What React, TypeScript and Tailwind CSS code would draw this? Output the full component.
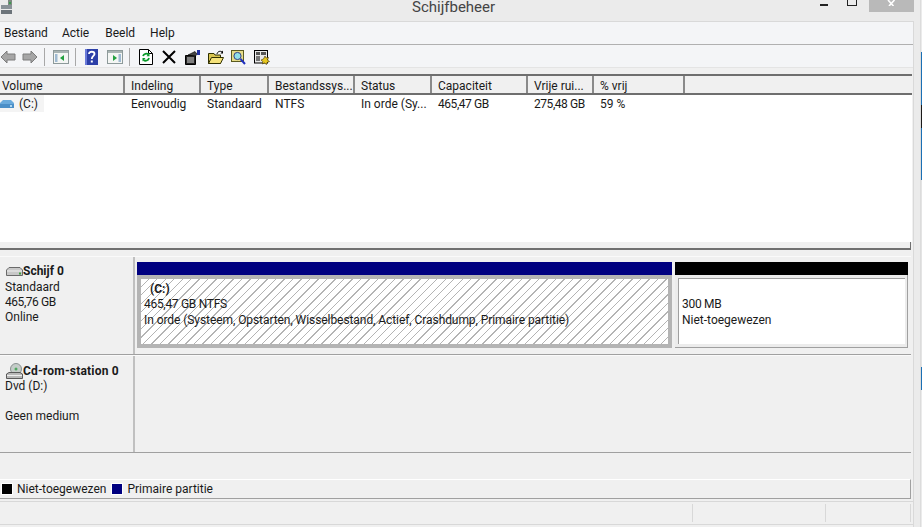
import React from "react";

const columns = [
  { label: "Volume", w: "w-[125px]" },
  { label: "Indeling", w: "w-[76px]" },
  { label: "Type", w: "w-[68px]" },
  { label: "Bestandssys...", w: "w-[86px]" },
  { label: "Status", w: "w-[77px]" },
  { label: "Capaciteit", w: "w-[96px]" },
  { label: "Vrije rui...", w: "w-[66px]" },
  { label: "% vrij", w: "w-[91px]" },
  { label: "", w: "flex-1" },
];

const cells = [
  { text: "Eenvoudig", w: "w-[76px]", track: "" },
  { text: "Standaard", w: "w-[68px]", track: "" },
  { text: "NTFS", w: "w-[86px]", track: "" },
  { text: "In orde (Sy...", w: "w-[77px]", track: "" },
  { text: "465,47 GB", w: "w-[96px]", track: "tracking-[-0.45px]" },
  { text: "275,48 GB", w: "w-[66px]", track: "tracking-[-0.45px]" },
  { text: "59 %", w: "w-[91px]", track: "" },
];

function AppIcon() {
  return (
    <svg width="12" height="14" viewBox="0 0 12 14" className="block">
      <rect x="0" y="5" width="11" height="4" fill="#8a9298" />
      <rect x="0" y="10" width="11" height="4" fill="#6c747a" />
      <rect x="7" y="0" width="4" height="5" fill="#7d8a80" />
      <rect x="8" y="2" width="2" height="2" fill="#3c9a50" />
    </svg>
  );
}

function ArrowLeft() {
  return (
    <svg width="16" height="14" viewBox="0 0 16 14" className="block">
      <path d="M7 1 L1 7 L7 13 V10 H15 V4 H7 Z" fill="#a6a6a6" stroke="#7c7c7c" />
    </svg>
  );
}

function ArrowRight() {
  return (
    <svg width="16" height="14" viewBox="0 0 16 14" className="block">
      <path d="M9 1 L15 7 L9 13 V10 H1 V4 H9 Z" fill="#a6a6a6" stroke="#7c7c7c" />
    </svg>
  );
}

function PaneIcon({ flip }: { flip?: boolean }) {
  return (
    <svg width="16" height="14" viewBox="0 0 16 14" className="block">
      <rect x="0.5" y="0.5" width="15" height="13" fill="#f4f6f4" stroke="#8d9a9a" />
      <rect x="1" y="1" width="14" height="2" fill="#a9b4b4" />
      {flip ? (
        <>
          <path d="M6 5 L10 8 L6 11 Z" fill="#22a040" />
          <path d="M11.5 5 H14 M11.5 7 H14 M11.5 9 H14 M11.5 11 H14" stroke="#4a7fb0" />
        </>
      ) : (
        <>
          <path d="M2 5 H4.5 M2 7 H4.5 M2 9 H4.5 M2 11 H4.5" stroke="#4a7fb0" />
          <path d="M11 5 L7 8 L11 11 Z" fill="#22a040" />
        </>
      )}
    </svg>
  );
}

function HelpIcon() {
  return (
    <svg width="13" height="16" viewBox="0 0 13 16" className="block">
      <rect width="13" height="16" fill="#2c3fa8" />
      <rect x="0" y="0" width="2" height="16" fill="#6a7ad8" />
      <path d="M4 5 C4 2 9.5 2 9.5 5 C9.5 7 6.8 7 6.8 10" fill="none" stroke="#fff" strokeWidth="1.8" />
      <rect x="5.8" y="11.5" width="2" height="2" fill="#fff" />
    </svg>
  );
}

function RefreshIcon() {
  return (
    <svg width="14" height="16" viewBox="0 0 14 16" className="block">
      <path d="M0.5 0.5 H9.5 L13.5 4.5 V15.5 H0.5 Z" fill="#fff" stroke="#000" />
      <path d="M9.5 0.5 V4.5 H13.5" fill="none" stroke="#000" />
      <path d="M4 7 A3.5 3.5 0 0 1 9.5 5.5 M10 9 A3.5 3.5 0 0 1 4.5 11" fill="none" stroke="#0a9a2a" strokeWidth="1.8" />
      <path d="M10.5 3.8 V7.2 H7.5 Z M3.5 12.5 V9 H6.5 Z" fill="#0a9a2a" />
    </svg>
  );
}

function DeleteIcon() {
  return (
    <svg width="14" height="14" viewBox="0 0 14 14" className="block">
      <path d="M1 1 L13 13 M13 1 L1 13" stroke="#000" strokeWidth="2" />
    </svg>
  );
}

function PropsIcon() {
  return (
    <svg width="16" height="15" viewBox="0 0 16 15" className="block">
      <path d="M0.5 5.5 H10.5 V14.5 H0.5 Z" fill="#222" stroke="#000" />
      <path d="M2 8 H9 M2 10 H9 M2 12 H9" stroke="#ddd" />
      <path d="M3 5 L10 1.5 L12 4 L10.5 6 Z" fill="#444" stroke="#000" strokeWidth="0.6" />
      <rect x="12" y="0" width="3" height="5" fill="#2030a0" />
    </svg>
  );
}

function FolderIcon() {
  return (
    <svg width="16" height="14" viewBox="0 0 16 14" className="block">
      <path d="M0.5 3.5 H6 L7 5 H12.5 V13.5 H0.5 Z" fill="#d8c450" stroke="#303000" />
      <path d="M0.5 13.5 L3.5 7.5 H15.5 L12.5 13.5 Z" fill="#f5e27a" stroke="#303000" />
      <path d="M9 4 C9.5 1.5 12 0.5 14.5 2" fill="none" stroke="#000" />
      <path d="M15 0.5 V3.5 H12.5 Z" fill="#000" />
    </svg>
  );
}

function SearchIcon() {
  return (
    <svg width="15" height="15" viewBox="0 0 15 15" className="block">
      <rect x="0.5" y="0.5" width="12" height="11" fill="#e6dc88" stroke="#5a5a20" />
      <circle cx="6.5" cy="6" r="3.6" fill="#8fe0e8" stroke="#30408a" />
      <path d="M9.5 9 L14 14" stroke="#2030c0" strokeWidth="2" />
    </svg>
  );
}

function SettingsIcon() {
  return (
    <svg width="16" height="15" viewBox="0 0 16 15" className="block">
      <rect x="0.5" y="0.5" width="13" height="12.5" fill="#e8e8e8" stroke="#000" />
      <rect x="2" y="2" width="4" height="3" fill="#555" />
      <rect x="7" y="2" width="5" height="3" fill="#555" />
      <rect x="2" y="6" width="4" height="5" fill="#777" />
      <path d="M11 6 L12 8 L14.5 7.5 L13.5 10 L15.5 11.5 L13 12.5 L12.5 14.5 L10.5 13 L8.5 14 L8.8 11.5 L7 10 L9.5 9 Z" fill="#e8c820" stroke="#403000" strokeWidth="0.6" />
    </svg>
  );
}

function VolumeIcon() {
  return (
    <svg width="14" height="8" viewBox="0 0 14 8" className="block">
      <path d="M3 0 H11 L14 3 V8 H0 V3 Z" fill="#6aaadc" />
      <rect x="0" y="4" width="14" height="4" fill="#4b8fc8" />
      <rect x="10" y="5" width="2" height="2" fill="#b0d8f0" />
    </svg>
  );
}

function DiskIcon() {
  return (
    <svg width="17" height="9" viewBox="0 0 17 9" className="block">
      <path d="M3 0.5 H14 L16.5 3 V8.5 H0.5 V3 Z" fill="#c8c8c8" stroke="#6a6a6a" />
      <rect x="1" y="3.5" width="15" height="1" fill="#f0f0f0" />
      <rect x="13" y="5.5" width="2" height="2" fill="#40a040" />
    </svg>
  );
}

function CdIcon() {
  return (
    <svg width="17" height="16" viewBox="0 0 17 16" className="block">
      <circle cx="10" cy="6" r="5.5" fill="#c4ccc8" stroke="#8a9090" />
      <circle cx="10" cy="6" r="1.5" fill="#50a860" />
      <path d="M3 9.5 H14 L16.5 11 V15.5 H0.5 V11 Z" fill="#b8b8b8" stroke="#5a5a5a" />
      <rect x="1" y="12" width="15" height="1" fill="#eeeeee" />
    </svg>
  );
}

function Sep() {
  return <div className="h-[18px] w-px bg-[#a8a8a8]" />;
}

function WindowButtons() {
  return (
    <div className="flex items-start">
      <div className="mt-[4px] h-[2px] w-[8px] bg-[#222]" />
      <div className="ml-[19px] h-[6px] w-[10px] border-x border-b border-[#222]" />
      <div className="ml-[12px] flex h-[12px] w-[45px] items-start justify-center bg-[#b9b9b9]">
        <svg width="9" height="6" viewBox="0 0 9 6" className="block">
          <path d="M1 0 L6.5 6 M7.5 0 L2 6" stroke="#fff" strokeWidth="1.6" />
        </svg>
      </div>
    </div>
  );
}

export default function App() {
  return (
    <div className="flex h-[527px] w-[922px] overflow-hidden bg-[#ebebeb] font-['Roboto',sans-serif] text-[12px] leading-[16px] text-[#1a1a1a]">
      <div className="flex w-[914px] flex-col">
        {/* title bar */}
        <div className="relative flex h-[21px] items-start justify-between">
          <div className="pl-[1px]">
            <AppIcon />
          </div>
          <div className="absolute left-[412px] top-0 text-[15px] leading-[15px] text-[#444]">Schijfbeheer</div>
          <div className="ml-auto">
            <WindowButtons />
          </div>
        </div>

        <div className="flex flex-1 flex-col border-r border-t border-[#d9d9d9] bg-[#f0f0f0] pb-[2px]">
          {/* menu */}
          <div className="flex h-[23px] items-center border-b border-[#b0b0b0] bg-[#f4f5f7] pl-[4px]">
            <span>Bestand</span>
            <span className="ml-[14px]">Actie</span>
            <span className="ml-[16px]">Beeld</span>
            <span className="ml-[15px]">Help</span>
          </div>

          {/* toolbar */}
          <div className="flex h-[23px] items-center border-b border-[#e4e4e4] bg-[#f4f5f7] pt-[2px]">
            <ArrowLeft />
            <div className="ml-[6px]"><ArrowRight /></div>
            <div className="ml-[6px]"><Sep /></div>
            <div className="ml-[8px]"><PaneIcon /></div>
            <div className="ml-[6px]"><Sep /></div>
            <div className="ml-[9px]"><HelpIcon /></div>
            <div className="ml-[9px]"><PaneIcon flip /></div>
            <div className="ml-[6px]"><Sep /></div>
            <div className="ml-[9px]"><RefreshIcon /></div>
            <div className="ml-[9px]"><DeleteIcon /></div>
            <div className="ml-[9px]"><PropsIcon /></div>
            <div className="ml-[7px]"><FolderIcon /></div>
            <div className="ml-[7px]"><SearchIcon /></div>
            <div className="ml-[8px]"><SettingsIcon /></div>
          </div>

          <div className="h-[6px] bg-[#f0f0f0]" />

          {/* volume table */}
          <div className="flex h-[168px] flex-col pr-[1px]">
            <div className="flex h-[21px] border-y-2 border-[#6e6e6e] bg-[#f0f0f0]">
              {columns.map((c) => (
                <div key={c.label} className={`${c.w} border-r-2 border-[#8a8a8a] pl-[6px] leading-[20px] first:pl-[2px] last:border-r-0`}>
                  {c.label}
                </div>
              ))}
            </div>
            <div className="flex-1 bg-white">
              <div className="flex h-[17px] items-center">
                <div className="flex w-[125px] items-center">
                  <div className="flex h-[17px] w-[44px] items-center bg-[#f4f4f4]">
                    <VolumeIcon />
                    <span className="ml-[5px]">(C:)</span>
                  </div>
                </div>
                {cells.map((c) => (
                  <div key={c.text} className={`${c.w} ${c.track} pl-[6px]`}>
                    {c.text}
                  </div>
                ))}
              </div>
            </div>
          </div>

          {/* splitter */}
          <div className="mr-[2px] h-[8px] border-b-2 border-r border-[#707070] bg-[#f0f0f0]" />

          {/* disk list */}
          <div className="flex flex-col pr-[2px] pt-[6px]">
            <div className="flex h-[99px] border-b border-t border-b-[#a0a0a0] border-t-[#fafafa]">
              <div className="w-[135px] border-r-2 border-[#c0c0c0] pl-[5px] pt-[6px]">
                <div className="flex items-center pl-[1px] font-bold">
                  <DiskIcon />
                  <span>Schijf 0</span>
                </div>
                <div>Standaard</div>
                <div className="mt-[-1px] tracking-[-0.45px]">465,76 GB</div>
                <div className="mt-[-1px]">Online</div>
              </div>
              <div className="flex flex-1 gap-[3px] pl-[2px] pr-[3px] pt-[5px]">
                <div className="flex w-[535px] flex-col">
                  <div className="h-[13px] bg-[#000080]" />
                  <div className="flex h-[73px] border-4 border-[#b4b4b4] bg-[repeating-linear-gradient(135deg,#ffffff,#ffffff_5px,#b4b4b4_5px,#b4b4b4_6px)]">
                    <div className="pl-[3px] pt-[2px]">
                      <div className="pl-[6px] font-bold">(C:)</div>
                      <div className="mt-[-1px] tracking-[-0.3px]">465,47 GB NTFS</div>
                      <div className="tracking-[-0.07px]">In orde (Systeem, Opstarten, Wisselbestand, Actief, Crashdump, Primaire partitie)</div>
                    </div>
                  </div>
                </div>
                <div className="flex flex-1 flex-col">
                  <div className="h-[13px] bg-black" />
                  <div className="flex h-[73px] flex-col border-b border-r border-[#a0a0a0] bg-[#ececec] pl-[3px] pr-[2px] pt-[3px] pb-[3px]">
                    <div className="flex-1 border-l border-t border-[#a0a0a0] bg-white pl-[3px] pt-[17px]">
                      <div className="tracking-[-0.3px]">300 MB</div>
                      <div>Niet-toegewezen</div>
                    </div>
                  </div>
                </div>
              </div>
            </div>

            <div className="flex h-[98px] border-b border-t border-b-[#a0a0a0] border-t-[#fafafa]">
              <div className="w-[135px] border-r-2 border-[#c0c0c0] pl-[5px] pt-[7px]">
                <div className="flex items-center pl-[1px] font-bold tracking-[0.2px]">
                  <CdIcon />
                  <span>Cd-rom-station 0</span>
                </div>
                <div className="mt-[-1px]">Dvd (D:)</div>
                <div className="mt-[14px]">Geen medium</div>
              </div>
              <div className="flex-1" />
            </div>
          </div>

          <div className="h-[26px]" />

          {/* legend */}
          <div className="mr-[2px] flex h-[20px] items-center border-b border-r border-t border-b-[#a0a0a0] border-r-[#a0a0a0] border-t-white pl-[1px]">
            <div className="h-[12px] w-[12px] border border-white bg-black" />
            <span className="ml-[4px]">Niet-toegewezen</span>
            <div className="ml-[5px] h-[12px] w-[12px] border border-white bg-[#000080]" />
            <span className="ml-[4px]">Primaire partitie</span>
          </div>

          {/* status bar */}
          <div className="mt-[2px] flex h-[24px] border-b border-t border-[#d8d8d8]">
            <div className="flex-1" />
            <div className="my-[2px] w-[133px] border-l border-[#d8d8d8]" />
            <div className="my-[2px] w-[85px] border-l border-[#d8d8d8]" />
            <div className="my-[2px] w-[3px] border-l border-[#d8d8d8]" />
          </div>
        </div>
      </div>

      {/* desktop edge, a sliver of what lies behind the window */}
      <div className="flex w-[8px]">
        <div className="flex-1 border-r border-[#dcdcdc]" />
        <div className="flex w-px flex-col">
          <div className="h-[52px]" />
          <div className="h-[53px] bg-[#1a6fb4]" />
          <div className="h-[23px] bg-[#1a1a1a]" />
          <div className="h-[52px] bg-[#1a6fb4]" />
          <div className="h-[187px] bg-[#e4e4e4]" />
          <div className="h-[23px] bg-[#1a6fb4]" />
          <div className="flex-1" />
        </div>
      </div>
    </div>
  );
}
